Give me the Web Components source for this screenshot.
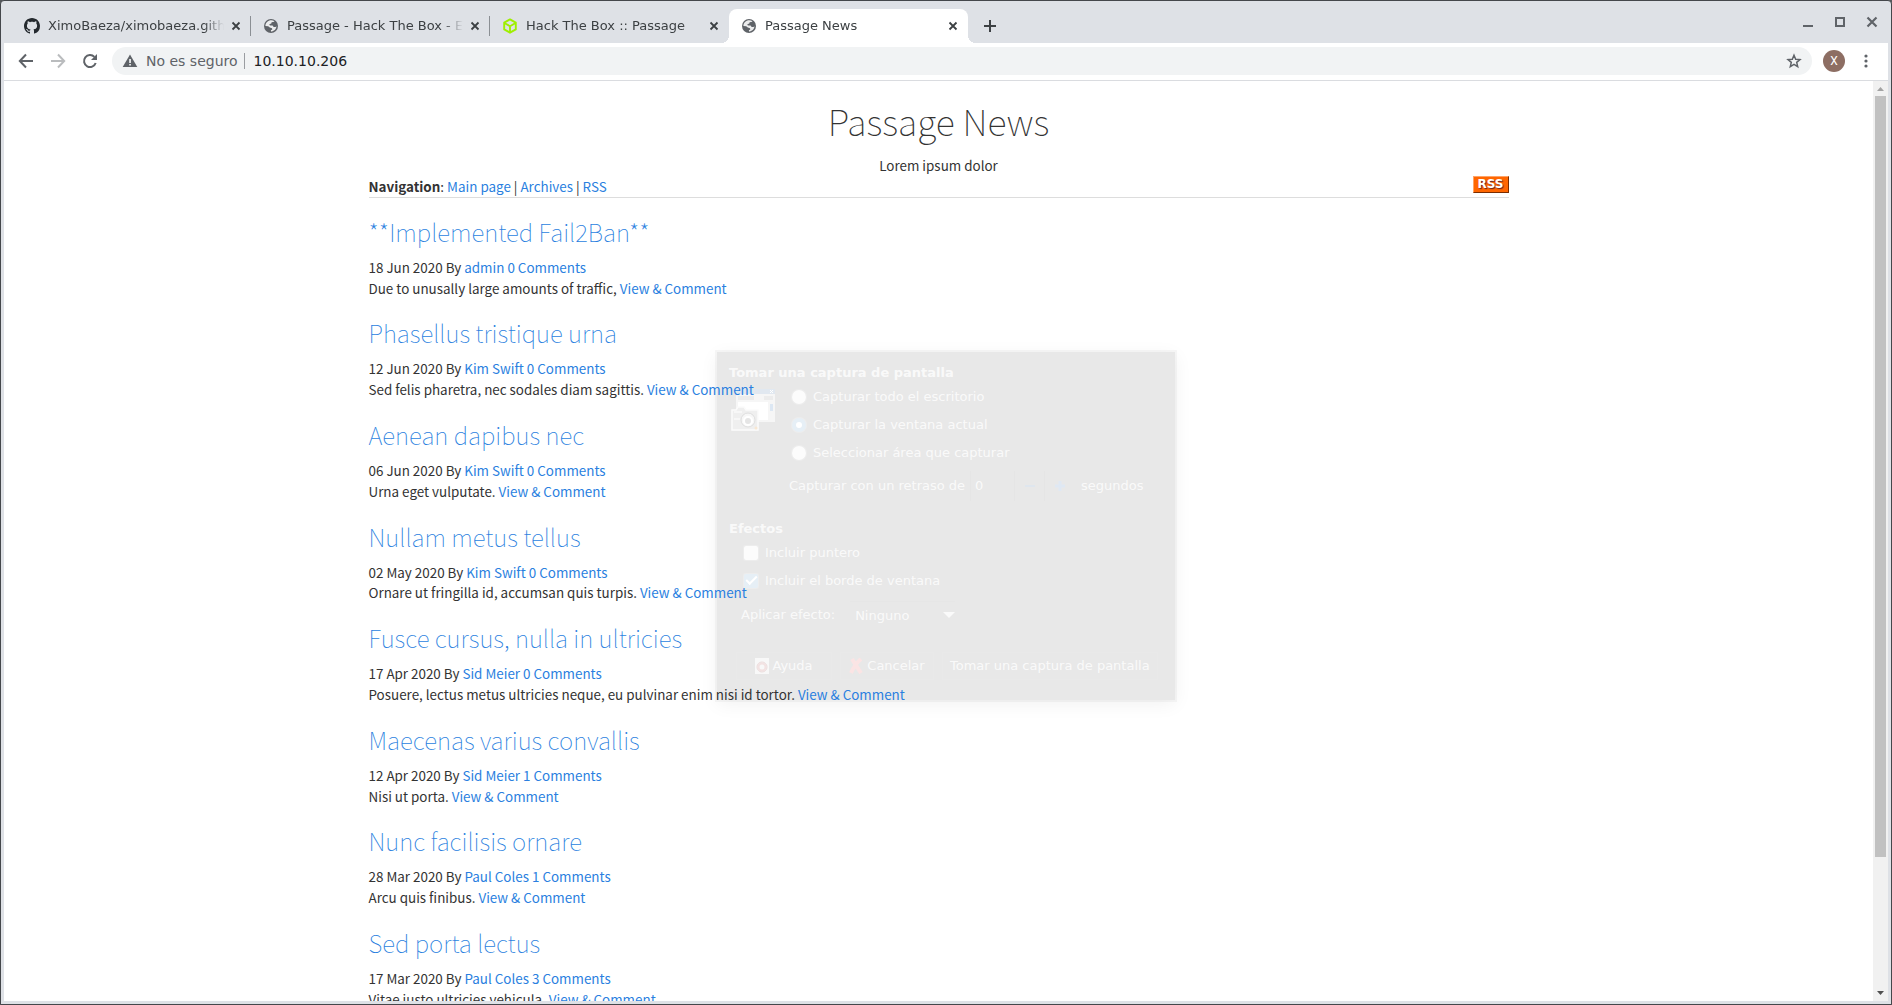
<!DOCTYPE html>
<html lang="es">
<head>
<meta charset="utf-8">
<title>Passage News</title>
<style>
  html, body { height: 100%; margin: 0; }
  body { background: #55585c; font-family: "DejaVu Sans", sans-serif; font-size: 13px; overflow: hidden; }
</style>
</head>
<body>
<browser-window>
  <tab-strip slot="tabs">
    <browser-tab icon="github">XimoBaeza/ximobaeza.github.io</browser-tab>
    <browser-tab icon="globe">Passage - Hack The Box - Ejemplo</browser-tab>
    <browser-tab icon="cube" last>Hack The Box :: Passage</browser-tab>
    <browser-tab icon="globe" last active>Passage News</browser-tab>
  </tab-strip>
  <tool-bar slot="toolbar"></tool-bar>
  <capture-dialog></capture-dialog>
  <news-page>
    <news-item date="18 Jun 2020" author="admin" comments="0" heading="**Implemented Fail2Ban**">Due to unusally large amounts of traffic,</news-item>
    <news-item date="12 Jun 2020" author="Kim Swift" comments="0" heading="Phasellus tristique urna">Sed felis pharetra, nec sodales diam sagittis.</news-item>
    <news-item date="06 Jun 2020" author="Kim Swift" comments="0" heading="Aenean dapibus nec">Urna eget vulputate.</news-item>
    <news-item date="02 May 2020" author="Kim Swift" comments="0" heading="Nullam metus tellus">Ornare ut fringilla id, accumsan quis turpis.</news-item>
    <news-item date="17 Apr 2020" author="Sid Meier" comments="0" heading="Fusce cursus, nulla in ultricies">Posuere, lectus metus ultricies neque, eu pulvinar enim nisi id tortor.</news-item>
    <news-item date="12 Apr 2020" author="Sid Meier" comments="1" heading="Maecenas varius convallis">Nisi ut porta.</news-item>
    <news-item date="28 Mar 2020" author="Paul Coles" comments="1" heading="Nunc facilisis ornare">Arcu quis finibus.</news-item>
    <news-item date="17 Mar 2020" author="Paul Coles" comments="3" heading="Sed porta lectus">Vitae justo ultricies vehicula.</news-item>
  </news-page>
</browser-window>

<script>
const ICONS = {
  github: '<svg viewBox="0 0 16 16" width="16" height="16" fill="#24292e"><path fill-rule="evenodd" d="M8 0C3.58 0 0 3.58 0 8c0 3.54 2.29 6.53 5.47 7.59.4.07.55-.17.55-.38 0-.19-.01-.82-.01-1.49-2.01.37-2.53-.49-2.69-.94-.09-.23-.48-.94-.82-1.13-.28-.15-.68-.52-.01-.53.63-.01 1.08.58 1.23.82.72 1.21 1.87.87 2.33.66.07-.52.28-.87.51-1.07-1.78-.2-3.64-.89-3.64-3.95 0-.87.31-1.59.82-2.15-.08-.2-.36-1.02.08-2.12 0 0 .67-.21 2.2.82.64-.18 1.32-.27 2-.27s1.36.09 2 .27c1.53-1.04 2.2-.82 2.2-.82.44 1.1.16 1.92.08 2.12.51.56.82 1.27.82 2.15 0 3.07-1.87 3.75-3.65 3.95.29.25.54.73.54 1.48 0 1.07-.01 1.93-.01 2.2 0 .21.15.46.55.38A8.01 8.01 0 0 0 16 8c0-4.42-3.58-8-8-8z"/></svg>',
  globe: '<svg viewBox="0 0 16 16" width="16" height="16"><circle cx="8" cy="8" r="7" fill="#5f6368"/><path fill="#fff" fill-opacity=".88" d="M8.2 2.3C9.4 2.3 10.600 2.700 11.500 3.300L10.800 4.200 8.600 4.300 8.300 5.600 6.300 6.300 6.900 7.400 9.700 7.500 10.600 9 12.500 9.100 13.500 8.300C13.300 11.200 10.900 13.500 8 13.600L7.900 12.300 9.300 11.600 9 10.300 6.800 9.600 5.200 8.300 2.400 8C2.400 4.900 5 2.300 8.200 2.300z" /><path fill="#5f6368" d="M9 4.500l2.600-.9 1.700 2.800-1.700 1.500-2.300-.8z"/></svg>',
  cube: '<svg viewBox="0 0 16 16" width="16" height="16" fill="none" stroke="#9fef00" stroke-width="1.900" stroke-linejoin="round"><path d="M8 1.400l5.800 3.200v6.800L8 14.700 2.200 11.400V4.600zM2.800 5.200L8 8.200l5.200-3M8 8.200v6"/></svg>',
  close: '<svg viewBox="0 0 16 16" width="16" height="16" stroke="#3c4043" stroke-width="1.800"><path d="M4.500 4.500l7 7M11.500 4.500l-7 7"/></svg>',
  plus: '<svg viewBox="0 0 16 16" width="16" height="16" stroke="#3c4043" stroke-width="2"><path d="M8 2v12M2 8h12"/></svg>',
  minimize: '<svg viewBox="0 0 16 16" width="16" height="16" fill="#5f6368"><path d="M3 11h10v2H3z"/></svg>',
  maximize: '<svg viewBox="0 0 16 16" width="16" height="16" fill="none" stroke="#5f6368" stroke-width="2"><path d="M4 4h8v8H4z"/></svg>',
  shut: '<svg viewBox="0 0 16 16" width="16" height="16" stroke="#5f6368" stroke-width="2.200"><path d="M3.500 3.500l9 9M12.500 3.500l-9 9"/></svg>',
  back: '<svg viewBox="0 0 16 16" width="16" height="16" fill="none" stroke="#5f6368" stroke-width="2"><path d="M15 8H2.500M8 1.500L1.800 8 8 14.500"/></svg>',
  forward: '<svg viewBox="0 0 16 16" width="16" height="16" fill="none" stroke="#babcbe" stroke-width="2"><path d="M1 8h12.500M8 1.500L14.200 8 8 14.500"/></svg>',
  reload: '<svg viewBox="0 0 16 16" width="16" height="16"><path fill="none" stroke="#5f6368" stroke-width="2" d="M13.700 10A6 6 0 1 1 12.400 3.900"/><path fill="#5f6368" d="M15 1v6H9z"/></svg>',
  warning: '<svg viewBox="0 0 16 16" width="16" height="16"><path fill="#5f6368" d="M8 1.500L15.300 14H.7z"/><path fill="#f1f3f4" d="M7.200 6h1.700v4H7.200zM7.200 11h1.700v1.600H7.200z"/></svg>',
  star: '<svg viewBox="0 0 16 16" width="16" height="16" fill="none" stroke="#5f6368" stroke-width="1.500"><path d="M8 2.200l1.700 4 4.300.4-3.300 2.800 1 4.300L8 11.400l-3.700 2.300 1-4.300L2 6.600l4.300-.4z"/></svg>',
  kebab: '<svg viewBox="0 0 16 16" width="16" height="16" fill="#5f6368"><circle cx="8" cy="3" r="1.600"/><circle cx="8" cy="8" r="1.600"/><circle cx="8" cy="13" r="1.600"/></svg>'
};

const define = (name, render) => customElements.define(name, class extends HTMLElement {
  connectedCallback() {
    if (this.shadowRoot) return;
    this.attachShadow({ mode: 'open' }).innerHTML = render(this);
  }
});

const BUTTON = 'button{all:unset;display:flex;align-items:center;justify-content:center;box-sizing:border-box;} svg{display:block;}';

define('browser-window', () => `
<style>
  :host { display: flex; flex-direction: column; box-sizing: border-box; height: 100vh;
    border: 1px solid #44474b; border-radius: 4px 4px 0 0; background: #dee1e6; overflow: hidden; }
  .view { display: flex; flex: 1; min-height: 0; margin: 0 3px 3px; background: #fff; }
  .page { flex: 1; min-width: 0; overflow: hidden; }
  .scroll { width: 15px; background: #f1f1f1; display: flex; flex-direction: column; align-items: center; }
  .scroll svg { display: block; flex: none; }
  .track { flex: 1; width: 11px; display: flex; flex-direction: column; }
  .thumb { flex: 59; background: #c1c1c1; }
  .track::after { content: ""; flex: 10; }
</style>
<slot name="tabs"></slot>
<slot name="toolbar"></slot>
<div class="view">
  <div class="page"><slot></slot></div>
  <div class="scroll">
    <svg width="15" height="15"><path fill="#a3a3a3" d="M4 10h7L7.500 6z"/></svg>
    <div class="track"><div class="thumb"></div></div>
    <svg width="15" height="15"><path fill="#505050" d="M4 5h7L7.500 9z"/></svg>
  </div>
</div>`);

define('tab-strip', () => `
<style>
  ${BUTTON}
  :host { display: flex; height: 42px; padding: 0 11px; color: #3c4043; }
  .new { width: 28px; height: 28px; margin: 11px 0 0 8px; }
  .controls { display: flex; align-items: flex-start; gap: 16px; margin: 13px 0 0 auto; }
</style>
<slot></slot>
<button class="new" aria-label="Nueva pestaña">${ICONS.plus}</button>
<div class="controls">
  <button aria-label="Minimizar">${ICONS.minimize}</button>
  <button aria-label="Maximizar">${ICONS.maximize}</button>
  <button aria-label="Cerrar">${ICONS.shut}</button>
</div>`);

define('browser-tab', el => `
<style>
  ${BUTTON}
  :host { display: flex; align-items: center; box-sizing: border-box; width: 239px; height: 34px; margin-top: 8px;
    padding: 0 7px 0 12px; position: relative; }
  :host([active]) { background: #fff; border-radius: 8px 8px 0 0; }
  :host([active])::before, :host([active])::after { content: ""; position: absolute; bottom: 0; width: 8px; height: 8px; }
  :host([active])::before { right: 100%; background: radial-gradient(circle at 0 0, transparent 8px, #fff 8px); }
  :host([active])::after { left: 100%; background: radial-gradient(circle at 100% 0, transparent 8px, #fff 8px); }
  .title { flex: 1; min-width: 0; justify-content: flex-start; margin: 0 4px 0 8px; white-space: nowrap; overflow: hidden;
    line-height: 20px; -webkit-mask-image: linear-gradient(to left, transparent, #000 20px); }
  .line { width: 1px; height: 20px; margin: 0 -7px 0 6px; background: #8b8f94; }
  :host([last]) .line { background: none; }
</style>
${ICONS[el.getAttribute('icon')]}
<button class="title" role="tab"><slot></slot></button>
<button aria-label="Cerrar pestaña">${ICONS.close}</button>
<span class="line"></span>`);

define('tool-bar', () => `
<style>
  ${BUTTON}
  :host { display: flex; align-items: center; height: 36px; margin: 0 3px; padding: 0 14px 1px 14px; gap: 16px;
    background: #fff; border-bottom: 1px solid #dadce0; }
  .omnibox { flex: 1; display: flex; align-items: center; height: 28px; box-sizing: border-box; margin: 0 -5px 0 -2px;
    padding: 0 10px; border-radius: 14px; background: #f1f3f4; font-size: 14px; color: #5f6368; }
  .security { margin-left: 8px; padding-right: 6px; }
  .sep { width: 1px; height: 16px; background: #9a9da1; }
  input { flex: 1; min-width: 0; border: 0; padding: 0 9px; background: none; outline: 0; font: inherit; color: #202124; }
  .avatar { width: 22px; height: 22px; margin-right: -3px; border-radius: 50%; background: #8d6e63; color: #fff; font: 12px Roboto, sans-serif; }
</style>
<button aria-label="Atrás">${ICONS.back}</button>
<button aria-label="Adelante">${ICONS.forward}</button>
<button aria-label="Recargar">${ICONS.reload}</button>
<div class="omnibox">
  ${ICONS.warning}<span class="security">No es seguro</span><span class="sep"></span>
  <input value="10.10.10.206" aria-label="Dirección">
  <button aria-label="Favoritos">${ICONS.star}</button>
</div>
<button class="avatar">X</button>
<button aria-label="Menú">${ICONS.kebab}</button>`);

/* font-size-adjust keeps the fallback family at the x-height of Source Sans Pro */
define('news-page', () => `
<style>
  :host { display: block; position: relative; max-width: 1140px; margin: 0 auto; padding-top: 12px; color: #333;
    font-family: "Source Sans Pro", "Noto Sans CJK SC", sans-serif; font-size: 16px; line-height: 1.3em; font-size-adjust: .486; }
  header { text-align: center; }
  h1 { margin: 0; font-size: 40px; line-height: 54px; font-weight: 100; }
  p { margin: 8px 0 0; font-size: 15px; }
  nav { display: flex; align-items: center; justify-content: space-between; font-size: 15px; border-bottom: 1px solid #ddd; margin-bottom: 5px; }
  a { color: #2a7fe0; text-decoration: none; }
  .rss { height: 17px; box-sizing: border-box; width: 36px; margin-bottom: 4px; border: 1px solid; border-color: #ffa366 #7a2c00 #7a2c00 #ffa366;
    background: #f60; color: #fff; font: bold 12px/15px "DejaVu Sans", sans-serif; font-size-adjust: none; text-align: center; text-shadow: 1px 1px 1px #622; }
</style>
<header><h1>Passage News</h1><p>Lorem ipsum dolor</p></header>
<nav><span><b>Navigation</b>: <a href="#">Main page</a> | <a href="#">Archives</a> | <a href="#">RSS</a></span><a class="rss" href="#">RSS</a></nav>
<slot></slot>`);

define('news-item', el => `
<style>
  :host { display: block; font-size: 15px; margin-bottom: 6px; }
  h2 { margin: 0; padding: 9px 0 5px; font-size: 27px; line-height: 40px; font-weight: 100; }
  a { color: #2a7fe0; text-decoration: none; }
  div { white-space: nowrap; }
</style>
<h2><a href="#">${el.getAttribute('heading')}</a></h2>
<div>${el.getAttribute('date')} By <a href="#">${el.getAttribute('author')}</a> <a href="#">${el.getAttribute('comments')} Comments</a></div>
<div><slot></slot> <a href="#">View &amp; Comment</a></div>`);

define('capture-dialog', () => `
<style>
  ${BUTTON}
  :host { display: block; position: absolute; top: 352px; left: calc(50% - 229px); width: 458px; height: 348px; box-sizing: border-box; padding: 11px 12px;
    background: rgba(0,0,0,.09); box-shadow: 0 0 0 2px rgba(0,0,0,.03), 0 4px 18px rgba(0,0,0,.06);
    color: rgba(255,255,255,.8); font-size: 13px; line-height: 20px; }
  h3 { margin: 0; font-size: 13px; font-weight: bold; line-height: 20px; }
  .shot { display: flex; gap: 14px; }
  .shot > svg { margin: 6px 0 0 2px; flex: none; }
  .row { display: flex; align-items: center; height: 28px; }
  label { white-space: nowrap; }
  input[type=radio], input[type=checkbox] { appearance: none; flex: none; width: 14px; height: 14px; margin: 0 7px 0 0; background: rgba(255,255,255,.85);
    box-shadow: 0 0 1px 1px rgba(255,255,255,.25); display: grid; place-items: center; }
  input[type=radio] { border-radius: 50%; }
  input[type=checkbox] { border-radius: 2px; }
  input:checked { background: #e6eff6; }
  input[type=radio]:checked::after { content: ""; width: 6px; height: 6px; border-radius: 50%; background: #fff; }
  input[type=checkbox]:checked::after { content: ""; width: 9px; height: 4px; border: solid #fff; border-width: 0 0 2px 2px; rotate: -45deg; margin-bottom: 4px; }
  .options .row:not(.delay) { padding-left: 3px; }
  .delay { margin-top: 5px; }
  .spin { display: flex; align-items: center; height: 30px; margin: 0 7px 0 5px; border-left: 1px solid #e5e5e5; }
  .spin input { all: unset; width: 39px; padding-left: 4px; }
  .spin button { width: 30px; height: 30px; border-left: 1px solid #e5e5e5; }
  .effects { margin-top: 19px; }
  .effects .row { padding-left: 15px; }
  .effects .apply { padding-left: 12px; margin-top: 6px; }
  .pick { display: flex; align-items: center; margin-left: 15px; border-top: 1px solid #e6e6e6; height: 28px; }
  select { all: unset; width: 88px; padding-left: 5px; }
  .actions { display: flex; align-items: center; gap: 8px; margin: 23px 0 0 7px; }
  .actions button { height: 28px; gap: 3px; padding: 0 7px; border: 1px solid rgba(255,255,255,.06); white-space: nowrap; }
  .actions button:nth-child(1) { width: 96px; }
  .actions button:nth-child(2) { width: 94px; }
</style>
<h3>Tomar una captura de pantalla</h3>
<div class="shot">
  <svg width="44" height="42" viewBox="0 0 44 42">
    <rect x="5" y="0" width="39" height="33" fill="#f6f6f6"/><rect x="5" y="0" width="39" height="5" fill="#e1e8f0"/>
    <path d="M39 1l3 3m0-3l-3 3" stroke="#fff"/><rect x="7" y="13" width="30" height="18" fill="#fff"/>
    <path d="M7 7h16v4H7zM33 7h9v4h-9z" fill="#ececec"/><path d="M39 15h3v7h-3z" fill="#dce7f3"/>
    <path d="M1 21h4l2-3h6l2 3h12v20H1z" fill="#efefef" stroke="#fbfbfb" stroke-width="1.500"/>
    <circle cx="17" cy="31" r="7" fill="#f7f7f7" stroke="#dedede"/><circle cx="17" cy="32" r="4" fill="#e5e5e5" stroke="#fff" stroke-width="2"/>
    <path d="M3 23h8M3 30h6" stroke="#fff"/><circle cx="25" cy="39" r="1.500" fill="#f8e7d2"/>
  </svg>
  <div class="options">
    <div class="row"><input type="radio" name="area" id="all"><label for="all">Capturar todo el escritorio</label></div>
    <div class="row"><input type="radio" name="area" id="win" checked><label for="win">Capturar la ventana actual</label></div>
    <div class="row"><input type="radio" name="area" id="sel"><label for="sel">Seleccionar área que capturar</label></div>
    <div class="row delay"><label for="wait">Capturar con un retraso de</label>
      <span class="spin"><input id="wait" type="text" value="0"><button aria-label="Menos"><svg width="12" height="12"><path d="M1 6h10" stroke="#dfe6ee" stroke-width="2"/></svg></button><button aria-label="Más"><svg width="12" height="12"><path d="M1 6h10M6 1v10" stroke="#dfe8f3" stroke-width="3"/></svg></button></span>
      <span>segundos</span></div>
  </div>
</div>
<div class="effects">
  <h3>Efectos</h3>
  <div class="row"><input type="checkbox" id="ptr"><label for="ptr">Incluir puntero</label></div>
  <div class="row"><input type="checkbox" id="brd" checked><label for="brd">Incluir el borde de ventana</label></div>
  <div class="row apply"><label for="fx">Aplicar efecto:</label>
    <span class="pick"><select id="fx"><option>Ninguno</option></select><svg width="12" height="7"><path d="M0 0h12L6 6z" fill="#fafafa"/></svg></span></div>
</div>
<div class="actions">
  <button><svg width="14" height="16"><path d="M0 0h14v16H0z" fill="#f8f8f8"/><circle cx="7" cy="9" r="3.500" fill="none" stroke="#f3e2e2" stroke-width="2"/><circle cx="7" cy="9" r="5" fill="none" stroke="#ecdcdc"/></svg>Ayuda</button>
  <button><svg width="15" height="16"><path d="M3 1q3 5 9 14M12 1Q6 6 2 15" fill="none" stroke="#fbe4e4" stroke-width="4"/></svg>Cancelar</button>
  <button>Tomar una captura de pantalla</button>
</div>`);
</script>
</body>
</html>
